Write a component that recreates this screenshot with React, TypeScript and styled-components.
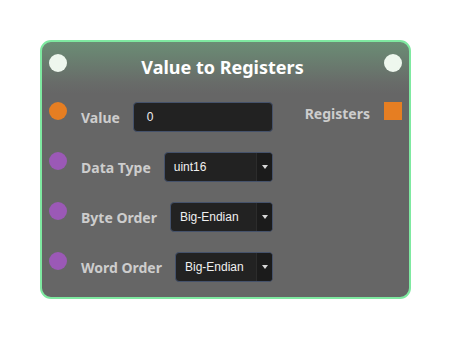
import React from "react";
import styled, { createGlobalStyle } from "styled-components";

const Global = createGlobalStyle`
  html, body { margin: 0; padding: 0; background: #ffffff; }
  body { font-family: "Noto Sans", "DejaVu Sans", sans-serif; }
`;

const Page = styled.div`
  padding: 40px 0 0 40px;
`;

const Node = styled.div`
  width: 367px;
  border: 2px solid #7fe9a1;
  border-radius: 11px;
  background: linear-gradient(to bottom, #6b8d75 0px, #686c69 40px, #666666 52px);
  overflow: hidden;
`;

const Header = styled.div`
  display: flex;
  align-items: flex-start;
  justify-content: space-between;
  padding: 12px 7px 8px 7px;
`;

const Dot = styled.div<{ $color: string }>`
  width: 18px;
  height: 18px;
  border-radius: 50%;
  background: ${(p) => p.$color};
  flex: none;
`;

const Title = styled.div`
  color: #ffffff;
  font-family: "Noto Sans", sans-serif;
  font-weight: 700;
  font-size: 18px;
  line-height: 18px;
  margin-top: 4px;
  padding-right: 6px;
`;

const Body = styled.div`
  display: flex;
  padding: 18px 7px 15px 7px;
`;

const Inputs = styled.div`
  width: 224px;
  display: flex;
  flex-direction: column;
  gap: 20px;
`;

const Row = styled.div`
  display: flex;
  align-items: center;
  height: 30px;
`;

const PortDot = styled(Dot)`
  align-self: flex-start;
  margin-right: 14px;
`;

const Label = styled.span`
  color: #cdcdcd;
  font-weight: 700;
  font-size: 14px;
  white-space: nowrap;
  margin-right: 13px;
  margin-top: 1px;
`;

const TextBox = styled.div`
  flex: 1;
  height: 30px;
  box-sizing: border-box;
  background: #222222;
  border: 1px solid #45526b;
  border-radius: 4px;
  color: #f0f0f0;
  font-family: "Liberation Sans", sans-serif;
  font-size: 12px;
  display: flex;
  align-items: center;
  padding-left: 13px;
`;

const Select = styled.div`
  flex: 1;
  height: 30px;
  box-sizing: border-box;
  background: #222222;
  border: 1px solid #45526b;
  border-radius: 4px;
  color: #f0f0f0;
  font-family: "Liberation Sans", sans-serif;
  font-size: 12px;
  display: flex;
  align-items: stretch;
  overflow: hidden;
`;

const SelectText = styled.span`
  flex: 1;
  display: flex;
  align-items: center;
  padding-left: 9px;
`;

const Arrow = styled.span`
  width: 15px;
  background: #1b1b1b;
  border-left: 1px solid #2c2c2c;
  display: flex;
  align-items: center;
  justify-content: center;
  &::after {
    content: "";
    border-left: 3.5px solid transparent;
    border-right: 3.5px solid transparent;
    border-top: 4px solid #d8d8d8;
  }
`;

const Outputs = styled.div`
  flex: 1;
  display: flex;
  flex-direction: column;
  align-items: flex-end;
`;

const OutRow = styled.div`
  display: flex;
  align-items: center;
  height: 18px;
`;

const OutLabel = styled.span`
  color: #cdcdcd;
  font-weight: 700;
  font-size: 14px;
  margin-right: 14px;
  margin-top: 4px;
`;

const Square = styled.div`
  width: 18px;
  height: 18px;
  background: #e67e22;
`;

const rows: { label: string; kind: "text" | "select"; value: string; color: string }[] = [
  { label: "Value", kind: "text", value: "0", color: "#e67e22" },
  { label: "Data Type", kind: "select", value: "uint16", color: "#9b59b6" },
  { label: "Byte Order", kind: "select", value: "Big-Endian", color: "#9b59b6" },
  { label: "Word Order", kind: "select", value: "Big-Endian", color: "#9b59b6" },
];

export default function App() {
  return (
    <>
      <Global />
      <Page>
        <Node>
          <Header>
            <Dot $color="#eef7ee" />
            <Title>Value to Registers</Title>
            <Dot $color="#eef7ee" />
          </Header>
          <Body>
            <Inputs>
              {rows.map((r) => (
                <Row key={r.label}>
                  <PortDot $color={r.color} />
                  <Label>{r.label}</Label>
                  {r.kind === "text" ? (
                    <TextBox>{r.value}</TextBox>
                  ) : (
                    <Select>
                      <SelectText>{r.value}</SelectText>
                      <Arrow />
                    </Select>
                  )}
                </Row>
              ))}
            </Inputs>
            <Outputs>
              <OutRow>
                <OutLabel>Registers</OutLabel>
                <Square />
              </OutRow>
            </Outputs>
          </Body>
        </Node>
      </Page>
    </>
  );
}
